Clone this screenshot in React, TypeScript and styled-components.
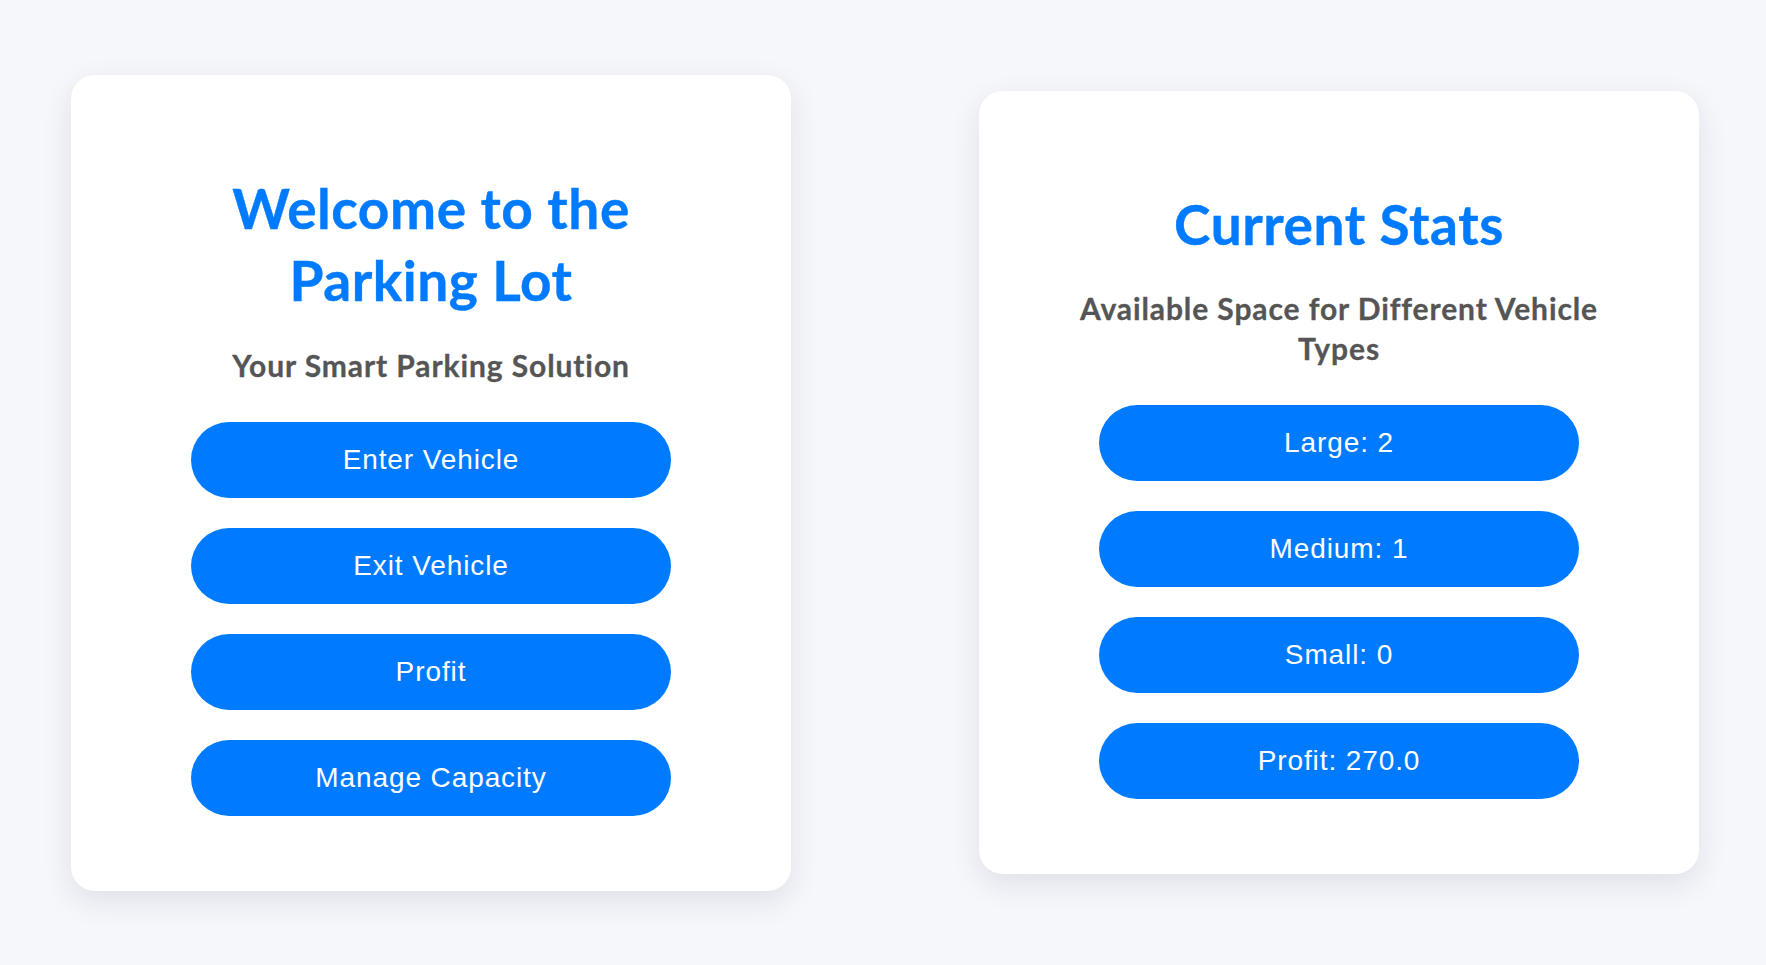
import React from "react";
import styled, { createGlobalStyle } from "styled-components";

const GlobalStyle = createGlobalStyle`
  html, body {
    margin: 0;
    padding: 0;
    background: #f6f7fb;
    font-family: Lato, "Open Sans", sans-serif;
  }
  * { box-sizing: border-box; }
`;

const Page = styled.main`
  width: 100%;
  height: 965px;
  display: flex;
  align-items: center;
  justify-content: space-between;
  padding: 0 67px 0 71px;
`;

const Card = styled.section`
  width: 720px;
  background: #ffffff;
  border-radius: 24px;
  box-shadow: 0 10px 30px rgba(20, 30, 60, 0.1);
  padding: 97px 60px 75px;
  display: flex;
  flex-direction: column;
  align-items: center;
`;

const Title = styled.h1`
  margin: 0;
  font-family: Lato, "Open Sans", sans-serif;
  font-weight: 700;
  font-size: 55px;
  line-height: 72.5px;
  letter-spacing: 0.55px;
  color: #007bff;
  text-align: center;
  max-width: 440px;
  -webkit-text-stroke: 0.4px #007bff;
`;

const Subtitle = styled.h2`
  margin: 28px 0 0;
  font-family: Lato, "Open Sans", sans-serif;
  font-weight: 700;
  font-size: 30px;
  line-height: 40px;
  letter-spacing: 0.9px;
  color: #555555;
  text-align: center;
  max-width: 560px;
  -webkit-text-stroke: 0.3px #555555;
`;

const ButtonList = styled.div`
  margin-top: 37px;
  width: 480px;
  display: flex;
  flex-direction: column;
  gap: 30px;
`;

const PillButton = styled.button`
  height: 76px;
  width: 100%;
  border: none;
  border-radius: 38px;
  background: #007bff;
  color: #ffffff;
  font-family: "Liberation Sans", Arial, sans-serif;
  font-size: 28px;
  letter-spacing: 0.9px;
  display: flex;
  align-items: center;
  justify-content: center;
  cursor: pointer;
  padding: 0;
`;

const actions = ["Enter Vehicle", "Exit Vehicle", "Profit", "Manage Capacity"];
const stats = [
  { label: "Large", value: "2" },
  { label: "Medium", value: "1" },
  { label: "Small", value: "0" },
  { label: "Profit", value: "270.0" },
];

export default function App() {
  return (
    <>
      <GlobalStyle />
      <Page>
        <Card>
          <Title>Welcome to the Parking Lot</Title>
          <Subtitle>Your Smart Parking Solution</Subtitle>
          <ButtonList>
            {actions.map((a) => (
              <PillButton key={a}>{a}</PillButton>
            ))}
          </ButtonList>
        </Card>
        <Card>
          <Title>Current Stats</Title>
          <Subtitle>Available Space for Different Vehicle Types</Subtitle>
          <ButtonList>
            {stats.map((s) => (
              <PillButton key={s.label}>
                {s.label}: {s.value}
              </PillButton>
            ))}
          </ButtonList>
        </Card>
      </Page>
    </>
  );
}
